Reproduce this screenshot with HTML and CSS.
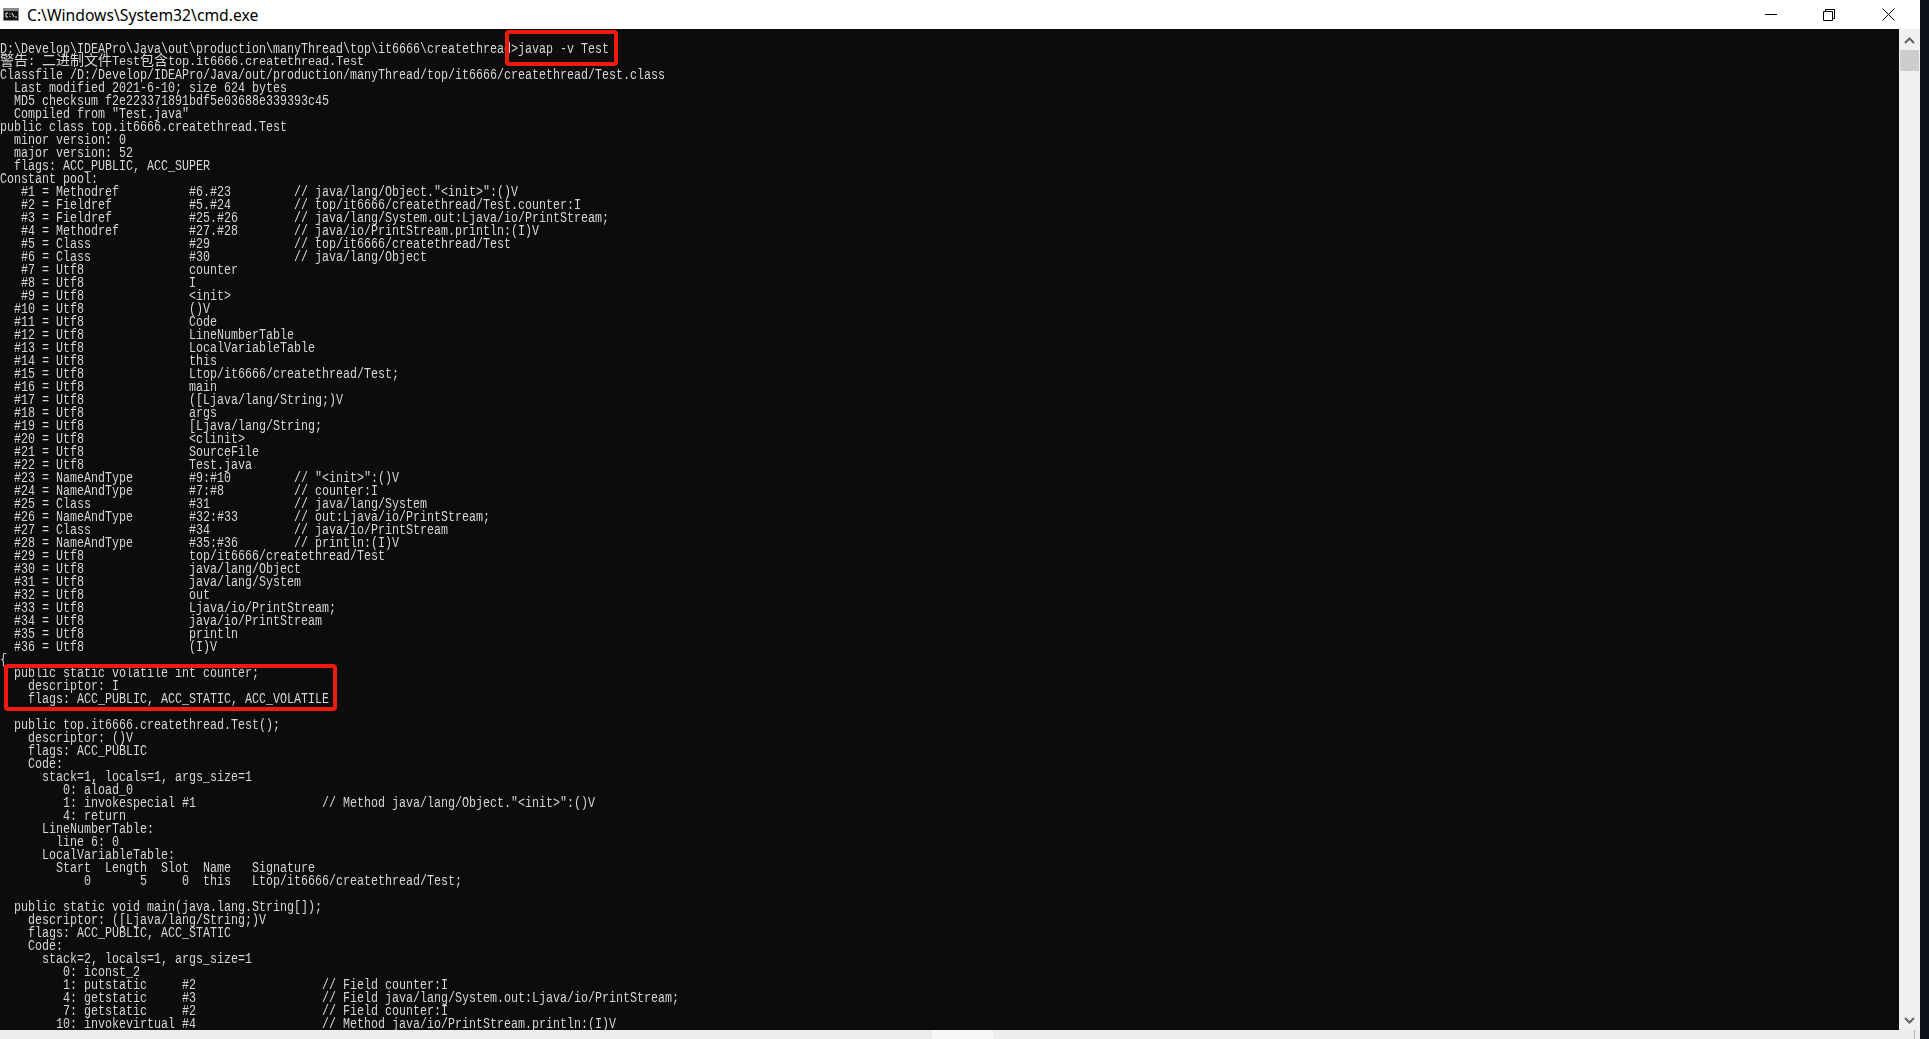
FILE: index.html
```html
<!DOCTYPE html>
<html lang="zh">
<head>
<meta charset="utf-8">
<title>cmd.exe</title>
<link rel="stylesheet" href="styles.css">
</head>
<body>
<div class="window">
<header class="titlebar">
<svg class="app-icon" width="16" height="13" viewBox="0 0 16 13"><rect width="16" height="13" fill="#8c8c8c"/><rect x="1" y="3" width="14" height="9" fill="#141414"/><path d="M5 5H3v4h2M7 5.500v1M7 8v1M9 5l2 4M12 9h2" stroke="#eee" fill="none"/></svg>
<span class="title">C:\Windows\System32\cmd.exe</span>
<div class="controls">
<svg class="ctl" width="12" height="12" viewBox="0 0 12 12"><path d="M0 5.500h12" stroke="#000" fill="none"/></svg>
<svg class="ctl" width="12" height="12" viewBox="0 0 12 12"><path d="M.5 2.500h9v9h-9zM2.500 2.500v-2h9v9h-2" stroke="#000" fill="none"/></svg>
<svg class="ctl ctl-close" width="13" height="13" viewBox="0 0 13 13"><path d="M.5.500l12 12M12.500.500l-12 12" stroke="#000" fill="none"/></svg>
</div>
</header>
<div class="body">
<main class="console">
<pre class="text">D:\Develop\IDEAPro\Java\out\production\manyThread\top\it6666\createthread&gt;javap -v Test<span class="warn"><span class="cjk">警告</span>: <span class="cjk">二进制文件</span>Test<span class="cjk">包含</span>top.it6666.createthread.Test</span>Classfile /D:/Develop/IDEAPro/Java/out/production/manyThread/top/it6666/createthread/Test.class
  Last modified 2021-6-10; size 624 bytes
  MD5 checksum f2e223371891bdf5e03688e339393c45
  Compiled from "Test.java"
public class top.it6666.createthread.Test
  minor version: 0
  major version: 52
  flags: ACC_PUBLIC, ACC_SUPER
Constant pool:
   #1 = Methodref          #6.#23         // java/lang/Object."&lt;init&gt;":()V
   #2 = Fieldref           #5.#24         // top/it6666/createthread/Test.counter:I
   #3 = Fieldref           #25.#26        // java/lang/System.out:Ljava/io/PrintStream;
   #4 = Methodref          #27.#28        // java/io/PrintStream.println:(I)V
   #5 = Class              #29            // top/it6666/createthread/Test
   #6 = Class              #30            // java/lang/Object
   #7 = Utf8               counter
   #8 = Utf8               I
   #9 = Utf8               &lt;init&gt;
  #10 = Utf8               ()V
  #11 = Utf8               Code
  #12 = Utf8               LineNumberTable
  #13 = Utf8               LocalVariableTable
  #14 = Utf8               this
  #15 = Utf8               Ltop/it6666/createthread/Test;
  #16 = Utf8               main
  #17 = Utf8               ([Ljava/lang/String;)V
  #18 = Utf8               args
  #19 = Utf8               [Ljava/lang/String;
  #20 = Utf8               &lt;clinit&gt;
  #21 = Utf8               SourceFile
  #22 = Utf8               Test.java
  #23 = NameAndType        #9:#10         // "&lt;init&gt;":()V
  #24 = NameAndType        #7:#8          // counter:I
  #25 = Class              #31            // java/lang/System
  #26 = NameAndType        #32:#33        // out:Ljava/io/PrintStream;
  #27 = Class              #34            // java/io/PrintStream
  #28 = NameAndType        #35:#36        // println:(I)V
  #29 = Utf8               top/it6666/createthread/Test
  #30 = Utf8               java/lang/Object
  #31 = Utf8               java/lang/System
  #32 = Utf8               out
  #33 = Utf8               Ljava/io/PrintStream;
  #34 = Utf8               java/io/PrintStream
  #35 = Utf8               println
  #36 = Utf8               (I)V
{
  public static volatile int counter;
    descriptor: I
    flags: ACC_PUBLIC, ACC_STATIC, ACC_VOLATILE

  public top.it6666.createthread.Test();
    descriptor: ()V
    flags: ACC_PUBLIC
    Code:
      stack=1, locals=1, args_size=1
         0: aload_0
         1: invokespecial #1                  // Method java/lang/Object."&lt;init&gt;":()V
         4: return
      LineNumberTable:
        line 6: 0
      LocalVariableTable:
        Start  Length  Slot  Name   Signature
            0       5     0  this   Ltop/it6666/createthread/Test;

  public static void main(java.lang.String[]);
    descriptor: ([Ljava/lang/String;)V
    flags: ACC_PUBLIC, ACC_STATIC
    Code:
      stack=2, locals=1, args_size=1
         0: iconst_2
         1: putstatic     #2                  // Field counter:I
         4: getstatic     #3                  // Field java/lang/System.out:Ljava/io/PrintStream;
         7: getstatic     #2                  // Field counter:I
        10: invokevirtual #4                  // Method java/io/PrintStream.println:(I)V</pre>
<div class="mark mark-cmd"></div>
<div class="mark mark-field"></div>
</main>
<aside class="scrollbar">
<svg width="11" height="7" viewBox="0 0 11 7"><path d="M1 6l4.500-4.500L10 6" stroke="#606060" stroke-width="2" fill="none"/></svg>
<div class="thumb"></div>
<div class="spacer"></div>
<svg width="11" height="7" viewBox="0 0 11 7"><path d="M1 1l4.500 4.500L10 1" stroke="#606060" stroke-width="2" fill="none"/></svg>
</aside>
</div>
<footer class="strip">
<div class="strip-light"></div>
<span class="clock">11:22</span>
<div class="strip-line"></div>
</footer>
</div>
</body>
</html>
```

FILE: styles.css
```css
html, body { margin: 0; height: 100%; overflow: hidden; background: #0d1016; }
.window { width: 1920px; height: 1039px; display: flex; flex-direction: column; }
.titlebar { height: 29px; flex: none; background: #fff; display: flex; align-items: center; padding-left: 3px; }
.app-icon { flex: none; margin-right: 8px; }
.title { font: 15.700px "Noto Sans", sans-serif; color: #000; }
.controls { margin-left: auto; display: flex; align-items: center; gap: 46px; padding-right: 25px; }
.ctl { display: block; }
.ctl-close { margin-left: 1px; }
.body { flex: 1; min-height: 0; display: flex; }
.console { flex: 1; position: relative; background: #0c0c0c; overflow: hidden; }
.text { margin: 0; padding-top: 14px; width: 2000px; font: 14px/13px "Liberation Mono", monospace; color: #d6d6d6; transform: scaleX(.8333); transform-origin: 0 0; }
.warn { display: block; height: 13px; transform: scaleX(1.2); transform-origin: 0 0; font-size: 12px; letter-spacing: -.2px; }
.cjk { font: 14px/0 "Noto Sans CJK SC", sans-serif; letter-spacing: 0; }
.mark { position: absolute; border: 4px solid #f01a10; border-radius: 4px; box-sizing: border-box; }
.mark-cmd { left: 505px; top: 1px; width: 113px; height: 36px; }
.mark-field { left: 4px; top: 635px; width: 333px; height: 47px; }
.scrollbar { width: 21px; flex: none; background: #f0f0f0; display: flex; flex-direction: column; align-items: center; padding: 8px 0 6px; box-sizing: border-box; }
.thumb { width: 19px; height: 21px; margin-top: 6px; background: #cdcdcd; }
.spacer { flex: 1; }
.strip { height: 9px; flex: none; position: relative; overflow: hidden; background: #ededed; }
.strip-light { position: absolute; left: 932px; top: 0; width: 61px; height: 9px; background: #f7f7f7; }
.strip-line { position: absolute; left: 1914px; top: 0; width: 1px; height: 9px; background: #bdbdbd; }
.clock { position: absolute; left: 1773px; top: 6px; font: 13px/16px "Noto Sans", sans-serif; color: #222; letter-spacing: 2px; }
```
